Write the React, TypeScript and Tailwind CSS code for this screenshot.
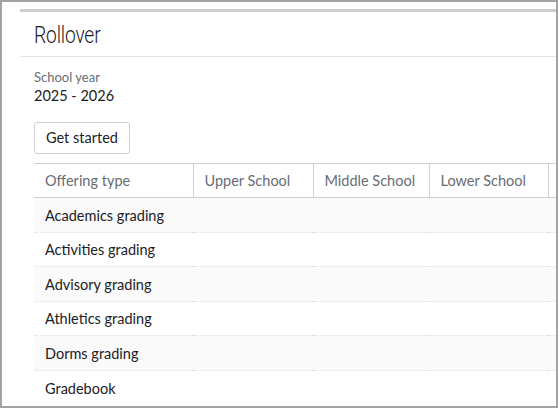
const rows = [
  "Academics grading",
  "Activities grading",
  "Advisory grading",
  "Athletics grading",
  "Dorms grading",
  "Gradebook",
];

const columns = ["Upper School", "Middle School", "Lower School"];

export default function App() {
  return (
    <div className="h-[408px] w-[558px] overflow-hidden border-2 border-[#a3a3a3] bg-white font-['Lato',sans-serif] text-[#212124]">
      <div className="ml-[18px] mt-[7px] border-t-[3px] border-[#cdcdd1]">
        {/* header */}
        <div className="flex h-[45px] items-center border-b border-[#e2e3e4] pl-[14px]">
          <h1 className="origin-left scale-x-[0.8] pt-[2px] font-['Roboto',sans-serif] text-[24px] font-light leading-none tracking-[-0.2px] text-[#1b1b1f]">
            Rollover
          </h1>
        </div>

        <div className="pl-[14px] pt-[12px]">
          <div className="text-[13px] leading-[16px] text-[#686c73]">School year</div>
          <div className="text-[14.5px] leading-[21px]">2025 - 2026</div>

          <button className="mt-[16px] h-[32px] rounded-[3px] border border-[#cdcfd2] bg-white px-[11px] text-[14.5px] leading-none">
            Get started
          </button>

          <table className="mt-[9px] w-[600px] table-fixed border-collapse text-left text-[14.5px]">
            <colgroup>
              <col className="w-[159px]" />
              <col className="w-[120px]" />
              <col className="w-[116px]" />
              <col className="w-[119px]" />
              <col />
            </colgroup>
            <thead>
              <tr className="h-[34px] border-y border-[#cdcfd2]">
                <th className="whitespace-nowrap px-[11px] pt-px font-normal text-[#686c73]">Offering type</th>
                {columns.map((c) => (
                  <th
                    key={c}
                    className="whitespace-nowrap border-l border-[#cdcfd2] px-[11px] pt-px font-normal text-[#686c73]"
                  >
                    {c}
                  </th>
                ))}
                <th className="border-l border-[#cdcfd2]"></th>
              </tr>
            </thead>
            <tbody>
              {rows.map((r, i) => (
                <tr
                  key={r}
                  className={
                    "h-[34.5px] border-dotted border-[#dcdcdc] " +
                    (i % 2 === 0 ? "bg-[#fafafa]" : "bg-white") +
                    (i === rows.length - 1 ? " border-b-0" : " border-b")
                  }
                >
                  <td className="whitespace-nowrap px-[11px] pt-[2px]">{r}</td>
                  <td></td>
                  <td></td>
                  <td></td>
                  <td></td>
                </tr>
              ))}
            </tbody>
          </table>
        </div>
      </div>
    </div>
  );
}
